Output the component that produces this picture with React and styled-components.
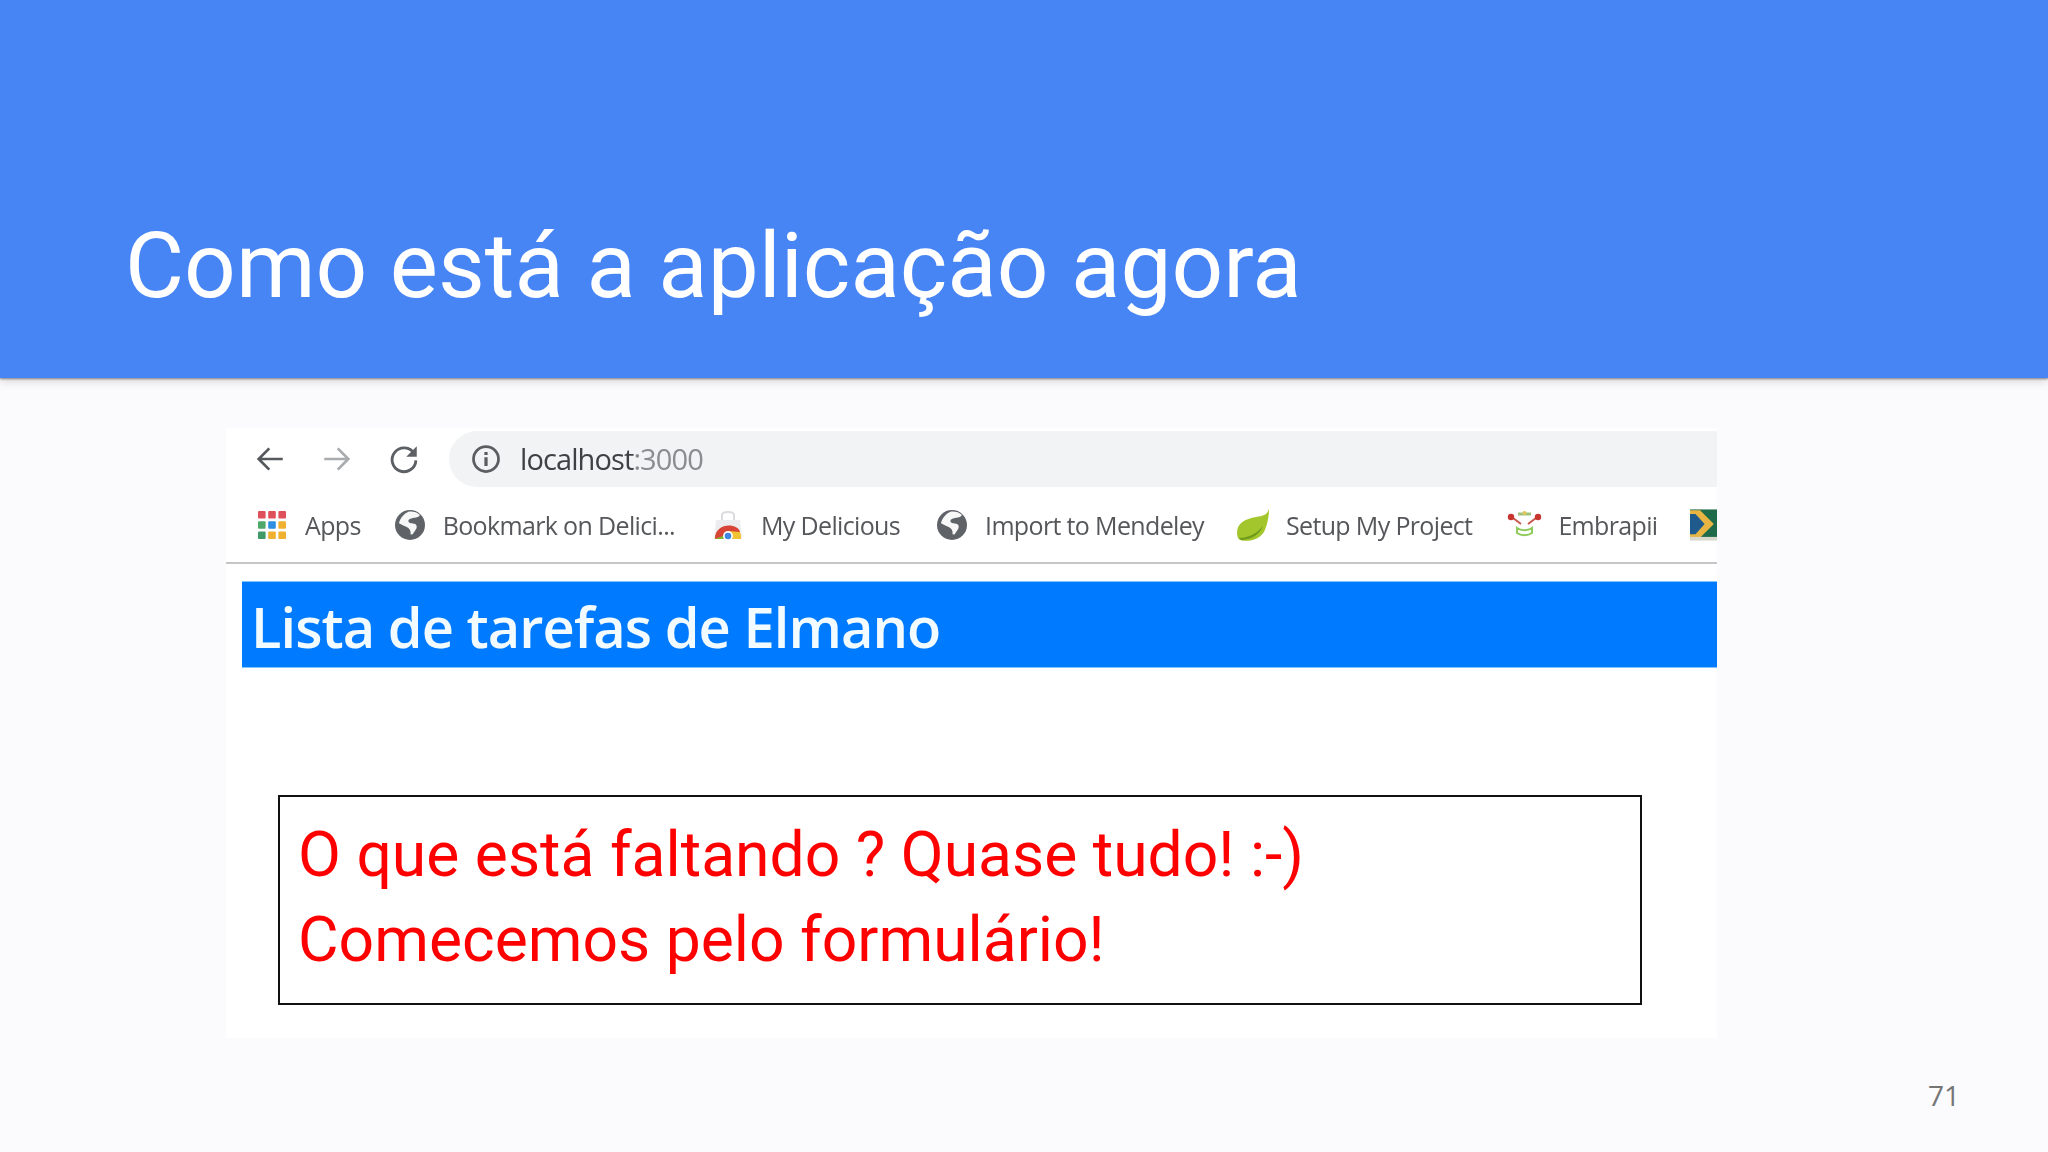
import React from 'react'
import styled, { createGlobalStyle } from 'styled-components'

const GlobalStyle = createGlobalStyle`
  html, body {
    margin: 0;
    padding: 0;
    background: #fbfafc;
  }
`

const Slide = styled.div`
  width: 2048px;
  height: 1152px;
  overflow: hidden;
  display: flex;
  flex-direction: column;
  background: #fbfafc;
  font-family: Roboto, sans-serif;
`
const Header = styled.header`
  height: 378px;
  flex: none;
  display: flex;
  align-items: flex-end;
  padding: 0 0 66px 125px;
  box-sizing: border-box;
  background: #4785f5;
  box-shadow: 0 1px 2px rgba(90, 90, 90, 0.7), 0 4px 8px rgba(90, 80, 80, 0.18);
`
const Title = styled.h1`
  margin: 0;
  font-size: 90.8px;
  font-weight: 400;
  line-height: 1;
  color: #fff;
  white-space: nowrap;
`
const Shot = styled.section`
  width: 1491px;
  height: 610px;
  flex: none;
  margin: 50px 0 0 226px;
  display: flex;
  flex-direction: column;
  background: #fff;
`
const NavRow = styled.div`
  height: 56px;
  margin-top: 3px;
  flex: none;
  display: flex;
  align-items: center;
`
const NavIcons = styled.div`
  width: 223px;
  flex: none;
  box-sizing: border-box;
  display: flex;
  align-items: center;
  gap: 33px;
  padding-left: 27px;
`
const AddressBar = styled.div`
  flex: 1;
  height: 56px;
  display: flex;
  align-items: center;
  gap: 19px;
  padding-left: 22px;
  background: #f2f3f5;
  border-radius: 28px 0 0 28px;
`
const Url = styled.span`
  font-family: 'Open Sans', sans-serif;
  font-size: 29px;
  letter-spacing: -0.9px;
  padding-bottom: 2px;
  color: #3f4144;
  filter: blur(0.4px);

  span {
    color: #8a8c8f;
  }
`
const Bookmarks = styled.div`
  height: 75px;
  flex: none;
  display: flex;
  align-items: center;
  padding-left: 31px;
  overflow: hidden;
  border-bottom: 2px solid #c6c6c6;
`
const Bookmark = styled.div`
  display: flex;
  align-items: center;
  gap: ${({ $gap }) => $gap}px;
  margin-right: ${({ $after }) => $after}px;
  flex: none;
`
const BookmarkLabel = styled.span`
  font-family: 'Open Sans', sans-serif;
  font-size: 25px;
  letter-spacing: -0.65px;
  color: #55575a;
  white-space: nowrap;
  filter: blur(0.4px);
`
const PageBar = styled.div`
  height: 85px;
  flex: none;
  margin: 18px 0 0 16px;
  padding: 3px 0 0 9px;
  box-sizing: border-box;
  display: flex;
  align-items: center;
  background: #007bff;
  box-shadow: 0 -1px 0 #7fc4ff, 0 1px 0 #7fc4ff;
`
const PageTitle = styled.h2`
  margin: 0;
  font-family: 'Open Sans', sans-serif;
  font-size: 56px;
  font-weight: 600;
  letter-spacing: -0.95px;
  color: #f2fbff;
  white-space: nowrap;
  filter: blur(0.5px);
`
const Note = styled.div`
  width: 1364px;
  height: 210px;
  flex: none;
  margin: 128px 0 0 52px;
  box-sizing: border-box;
  border: 2px solid #111;
  padding: 15px 0 0 18px;
  font-size: 62.4px;
  line-height: 85px;
  color: #ff0000;
`
const Footer = styled.footer`
  flex: 1;
  display: flex;
  align-items: flex-end;
  justify-content: flex-end;
  padding: 0 88px 40px 0;
`
const PageNumber = styled.span`
  font-family: 'Open Sans', sans-serif;
  font-size: 28px;
  line-height: 34px;
  color: #757575;
`

const Arrow = ({ flip, color }) => (
  <svg width="34" height="34" viewBox="0 0 24 24" fill="none" stroke={color} strokeWidth="1.9" style={flip ? { transform: 'scaleX(-1)' } : undefined}>
    <path d="M21 12H4M11.5 4.5 4 12l7.5 7.5" />
  </svg>
)

const Reload = () => (
  <svg width="34" height="34" viewBox="0 0 24 24" fill="none">
    <path d="M19.2 8.2A8.4 8.4 0 1 0 20.4 13" stroke="#5c5f63" strokeWidth="2" />
    <path d="M21 3v7.4h-7.4z" fill="#5c5f63" />
  </svg>
)

const Info = () => (
  <svg width="30" height="30" viewBox="0 0 24 24" fill="none" stroke="#5b5e61">
    <circle cx="12" cy="12" r="10" strokeWidth="2.2" />
    <path d="M12 10.500v7M12 6.300v2.400" strokeWidth="2.6" />
  </svg>
)

const AppsIcon = () => {
  const colors = ['#e0505a', '#e0505a', '#e0505a', '#4fa868', '#2f8fe0', '#f0b030', '#3f9a68', '#f0b030', '#f0b030']
  return (
    <svg width="30" height="30" viewBox="0 0 30 30">
      {colors.map((c, i) => (
        <rect key={i} x={1 + (i % 3) * 10.2} y={1 + Math.floor(i / 3) * 10.2} width="7.6" height="7.6" rx="1" fill={c} />
      ))}
    </svg>
  )
}

const Globe = () => (
  <svg width="30" height="30" viewBox="0 0 30 30">
    <circle cx="15" cy="15" r="15" fill="#5f6368" />
    <path d="M14 1.500c4-.5 8 .5 11 3.500-1.500 2.500-4.500 2.500-7 3-2.500.6-5 1.300-4.500 3.500.4 2 4 1.500 6.500 2.500 2.500 1.200 2 4 .5 6-1 1.500-2 3-3 4.500l-2-.2c.5-3-.5-5-2.500-6.500-2-1.500-6-2.500-9-4.500 1-5 4.500-9.500 10-11.800z" fill="#fff" opacity=".95" />
  </svg>
)

const StoreIcon = () => (
  <svg width="30" height="32" viewBox="0 0 30 32">
    <path d="M3 11h24l2 19H1z" fill="#ededef" />
    <path d="M9 11V6c0-4 12-4 12 0v5" fill="none" stroke="#dcdce0" strokeWidth="2" />
    <path d="M2 30c0-17 26-17 26 0z" fill="#7fb62e" />
    <path d="M2 30C2 13 25 14 27 23L15 25z" fill="#d84436" />
    <path d="M15 22 27 23c1 2 1 5 1 7h-8z" fill="#f1c232" />
    <circle cx="15" cy="27" r="5" fill="#fff" />
    <circle cx="15" cy="27" r="3.300" fill="#3f86e0" />
  </svg>
)

const Leaf = () => (
  <svg width="34" height="32" viewBox="0 0 34 32">
    <path d="M33 0C31 6 27 7 20 8 9 10 1 14 1 24c0 3 1 6 3 7 6 2 18 1 24-8 3-6 5-15 5-23z" fill="#a3c62c" />
    <path d="M3 29c7 0 17-3 24-12-4 9-10 13-22 14z" fill="#6f9a1c" />
  </svg>
)

const EmbrapiiIcon = () => (
  <svg width="35" height="32" viewBox="0 0 35 32">
    <path d="M6 9 14 15M29 9 21 15" stroke="#c9574e" strokeWidth="2" />
    <circle cx="4" cy="8" r="3.200" fill="#c8352f" />
    <circle cx="31" cy="8" r="3.200" fill="#c8352f" />
    <path d="M11 5h13" stroke="#9ec27a" strokeWidth="3" />
    <path d="M10 19c4 3 11 3 15 0v5c-4 3-11 3-15 0z" fill="#fff" stroke="#8ecb5a" strokeWidth="2" />
    <circle cx="17.500" cy="4" r="2" fill="#e3c65a" />
  </svg>
)

const GovIcon = () => (
  <svg width="30" height="34" viewBox="0 0 30 34">
    <rect width="30" height="32" fill="#1f6a48" />
    <path d="M0 1h11l15 15-15 15H0z" fill="#e8b544" />
    <path d="M0 5h6l10 11L6 27H0z" fill="#1e5b8c" />
    <rect y="30" width="30" height="4" fill="#d8d8cc" />
  </svg>
)

const bookmarks = [
  { label: 'Apps', icon: <AppsIcon />, gap: 18, after: 34 },
  { label: 'Bookmark on Delici...', icon: <Globe />, gap: 18, after: 38 },
  { label: 'My Delicious', icon: <StoreIcon />, gap: 18, after: 37 },
  { label: 'Import to Mendeley', icon: <Globe />, gap: 18, after: 32 },
  { label: 'Setup My Project', icon: <Leaf />, gap: 16, after: 35 },
  { label: 'Embrapii', icon: <EmbrapiiIcon />, gap: 16, after: 32 },
]

const App = () => {
  return (
    <Slide>
      <GlobalStyle />
      <Header>
        <Title>Como está a aplicação agora</Title>
      </Header>
      <Shot>
        <NavRow>
          <NavIcons>
            <Arrow color="#55585c" />
            <Arrow flip color="#a9acaf" />
            <Reload />
          </NavIcons>
          <AddressBar>
            <Info />
            <Url>
              localhost<span>:3000</span>
            </Url>
          </AddressBar>
        </NavRow>
        <Bookmarks>
          {bookmarks.map((item) => (
            <Bookmark key={item.label} $gap={item.gap} $after={item.after}>
              {item.icon}
              <BookmarkLabel>{item.label}</BookmarkLabel>
            </Bookmark>
          ))}
          <GovIcon />
        </Bookmarks>
        <PageBar>
          <PageTitle>Lista de tarefas de Elmano</PageTitle>
        </PageBar>
        <Note>
          O que está faltando ? Quase tudo! :-)
          <br />
          Comecemos pelo formulário!
        </Note>
      </Shot>
      <Footer>
        <PageNumber>71</PageNumber>
      </Footer>
    </Slide>
  )
}

export default App
